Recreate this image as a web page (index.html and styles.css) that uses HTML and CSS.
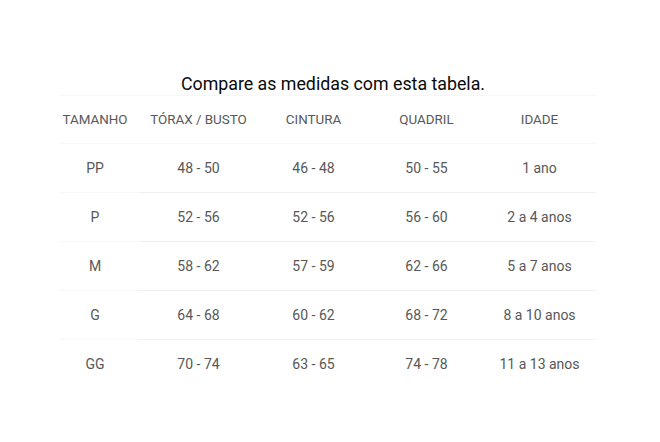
FILE: index.html
```html
<!DOCTYPE html>
<html lang="pt">
<head>
<meta charset="utf-8">
<link rel="stylesheet" href="styles.css">
</head>
<body>
<div class="wrap">
  <h2 class="title">Compare as medidas com esta tabela.</h2>
  <table class="sizes">
    <thead>
      <tr><th class="c1">TAMANHO</th><th class="c2">TÓRAX / BUSTO</th><th>CINTURA</th><th>QUADRIL</th><th>IDADE</th></tr>
    </thead>
    <tbody>
      <tr><th class="c1">PP</th><td>48 - 50</td><td>46 - 48</td><td>50 - 55</td><td>1 ano</td></tr>
      <tr><th class="c1">P</th><td>52 - 56</td><td>52 - 56</td><td>56 - 60</td><td>2 a 4 anos</td></tr>
      <tr><th class="c1">M</th><td>58 - 62</td><td>57 - 59</td><td>62 - 66</td><td>5 a 7 anos</td></tr>
      <tr><th class="c1">G</th><td>64 - 68</td><td>60 - 62</td><td>68 - 72</td><td>8 a 10 anos</td></tr>
      <tr class="last"><th class="c1">GG</th><td>70 - 74</td><td>63 - 65</td><td>74 - 78</td><td>11 a 13 anos</td></tr>
    </tbody>
  </table>
</div>
</body>
</html>
```
FILE: styles.css
```css
html, body {
  margin: 0;
  padding: 0;
  background: #ffffff;
  font-family: Roboto, "Liberation Sans", sans-serif;
}
.wrap {
  width: 536px;
  margin: 0 0 0 60px;
  padding-top: 73px;
}
.title {
  margin: 0;
  font-size: 17.8px;
  font-weight: 400;
  color: #0a0a0a;
  text-align: center;
  line-height: 22px;
  padding: 0 0 0 10px;
  border-bottom: 1px solid #f7f7f7;
}
.sizes {
  width: 536px;
  border-collapse: collapse;
  table-layout: fixed;
}
.sizes th, .sizes td {
  font-weight: 400;
  color: #585858;
  text-align: center;
  padding: 0;
  height: 48px;
  border-bottom: 1px solid #f0f0f0;
}
.sizes thead th {
  font-size: 13.4px;
  height: 47px;
  border-bottom: 1px solid #f8f8f8;
}
.sizes tbody td, .sizes tbody th {
  font-size: 14px;
}
.sizes .c1 {
  width: 70px;
  padding-right: 10px;
  border-bottom-color: #f8f8f8;
}
.sizes .c2 {
  width: 117px;
}
.sizes tr.last th, .sizes tr.last td {
  border-bottom: none;
}
```
